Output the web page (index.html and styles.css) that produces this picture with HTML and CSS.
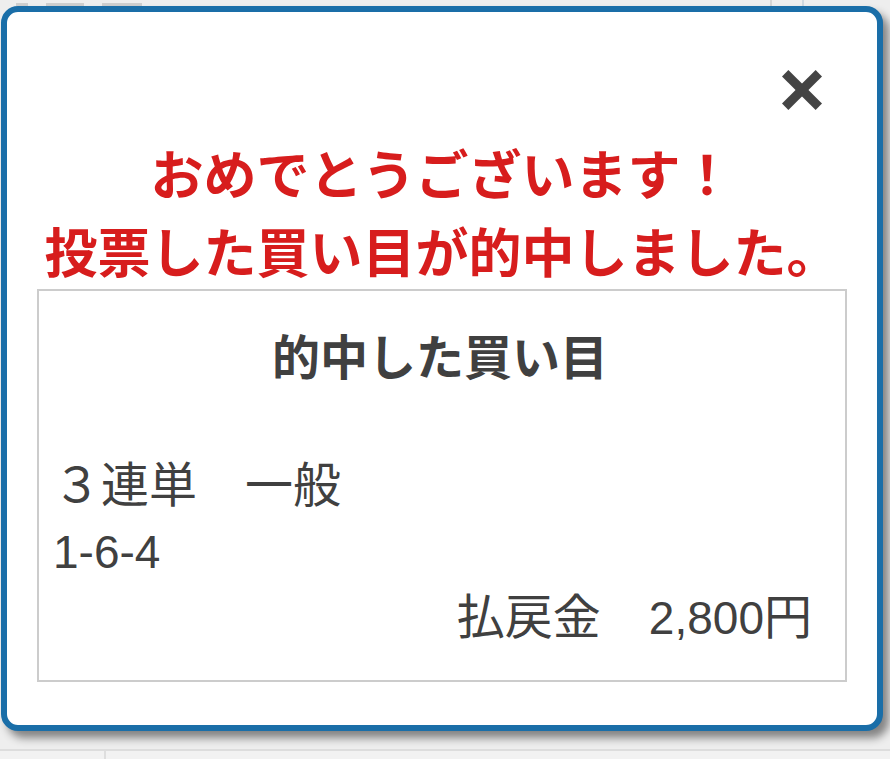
FILE: index.html
```html
<!DOCTYPE html>
<html lang="ja">
<head>
<meta charset="utf-8">
<title>的中</title>
<link rel="stylesheet" href="styles.css">
</head>
<body>
<div class="page">
  <div class="bg-head">
    <span class="bg-mark bg-mark-a"></span>
    <span class="bg-mark bg-mark-b"></span>
    <span class="bg-mark bg-mark-c"></span>
    <span class="bg-rule"></span>
  </div>
  <div class="bg-foot">
    <span class="bg-cell"></span>
    <span class="bg-cell bg-cell-wide"></span>
  </div>
</div>

<div class="modal">
  <button class="close" aria-label="閉じる">
    <svg viewBox="0 0 40 40" width="40" height="40">
      <line x1="3.2" y1="3.2" x2="36.8" y2="36.8" />
      <line x1="36.8" y1="3.2" x2="3.2" y2="36.8" />
    </svg>
  </button>
  <h1 class="congrats">おめでとうございます！<br>投票した買い目が的中しました。</h1>
  <div class="box">
    <h2 class="box-title">的中した買い目</h2>
    <div class="bet">
      <div class="bet-type">３連単　一般</div>
      <div class="bet-nums"><span class="latin">1-6-4</span></div>
      <div class="payout">払戻金　<span class="latin">2,800</span>円</div>
    </div>
  </div>
</div>
</body>
</html>
```

FILE: styles.css
```css
html, body {
  margin: 0;
  padding: 0;
}

body {
  width: 890px;
  height: 759px;
  overflow: hidden;
  background: #eeeeee;
  font-family: "Liberation Sans", "Noto Sans CJK JP", sans-serif;
  position: relative;
}

.page {
  height: 759px;
  display: flex;
  flex-direction: column;
}

.bg-head {
  height: 7px;
  display: flex;
  align-items: flex-end;
  padding-left: 16px;
  gap: 18px;
}

.bg-mark {
  height: 3px;
  background: #cfcfcf;
  margin-bottom: 1px;
}

.bg-mark-a {
  width: 12px;
}

.bg-mark-b {
  width: 38px;
}

.bg-mark-c {
  width: 40px;
}

.bg-rule {
  margin-left: auto;
  margin-right: 86px;
  width: 30px;
  height: 7px;
  border-left: 2px solid #d6d6d6;
  border-right: 2px solid #cfd8e0;
}

.bg-foot {
  margin-top: auto;
  height: 8px;
  border-top: 2px solid #dddddd;
  background: #f2f2f2;
  display: flex;
}

.bg-cell {
  width: 104px;
  border-right: 2px solid #dedede;
}

.bg-cell-wide {
  flex: 1;
  border-right: none;
}

.modal {
  position: absolute;
  left: 1px;
  top: 6px;
  width: 870px;
  height: 713px;
  border: 6px solid #1a6ea8;
  border-radius: 17px;
  background: #ffffff;
  box-shadow: 6px 7px 9px rgba(0, 0, 0, 0.45);
}

.close {
  position: absolute;
  top: 58px;
  right: 55px;
  width: 40px;
  height: 40px;
  padding: 0;
  border: none;
  background: none;
  cursor: pointer;
}

.close svg {
  display: block;
}

.close line {
  stroke: #444444;
  stroke-width: 9;
  stroke-linecap: butt;
}

.congrats {
  margin: 0;
  padding-top: 121px;
  text-align: center;
  font-family: "Noto Sans CJK JP", sans-serif;
  font-weight: bold;
  font-size: 53px;
  line-height: 78px;
  color: #d71d1d;
}

.box {
  margin: 0 30px;
  border: 2px solid #cccccc;
  padding: 30px 33px 29px 14px;
  color: #404040;
}

.box-title {
  margin: 0;
  text-align: center;
  font-family: "Noto Sans CJK JP", sans-serif;
  font-weight: bold;
  font-size: 48px;
  line-height: 66px;
  padding-left: 15px;
}

.bet {
  margin-top: 66px;
  font-size: 48px;
  line-height: 66px;
}

.latin {
  font-size: 46px;
}

.payout {
  text-align: right;
}
```
